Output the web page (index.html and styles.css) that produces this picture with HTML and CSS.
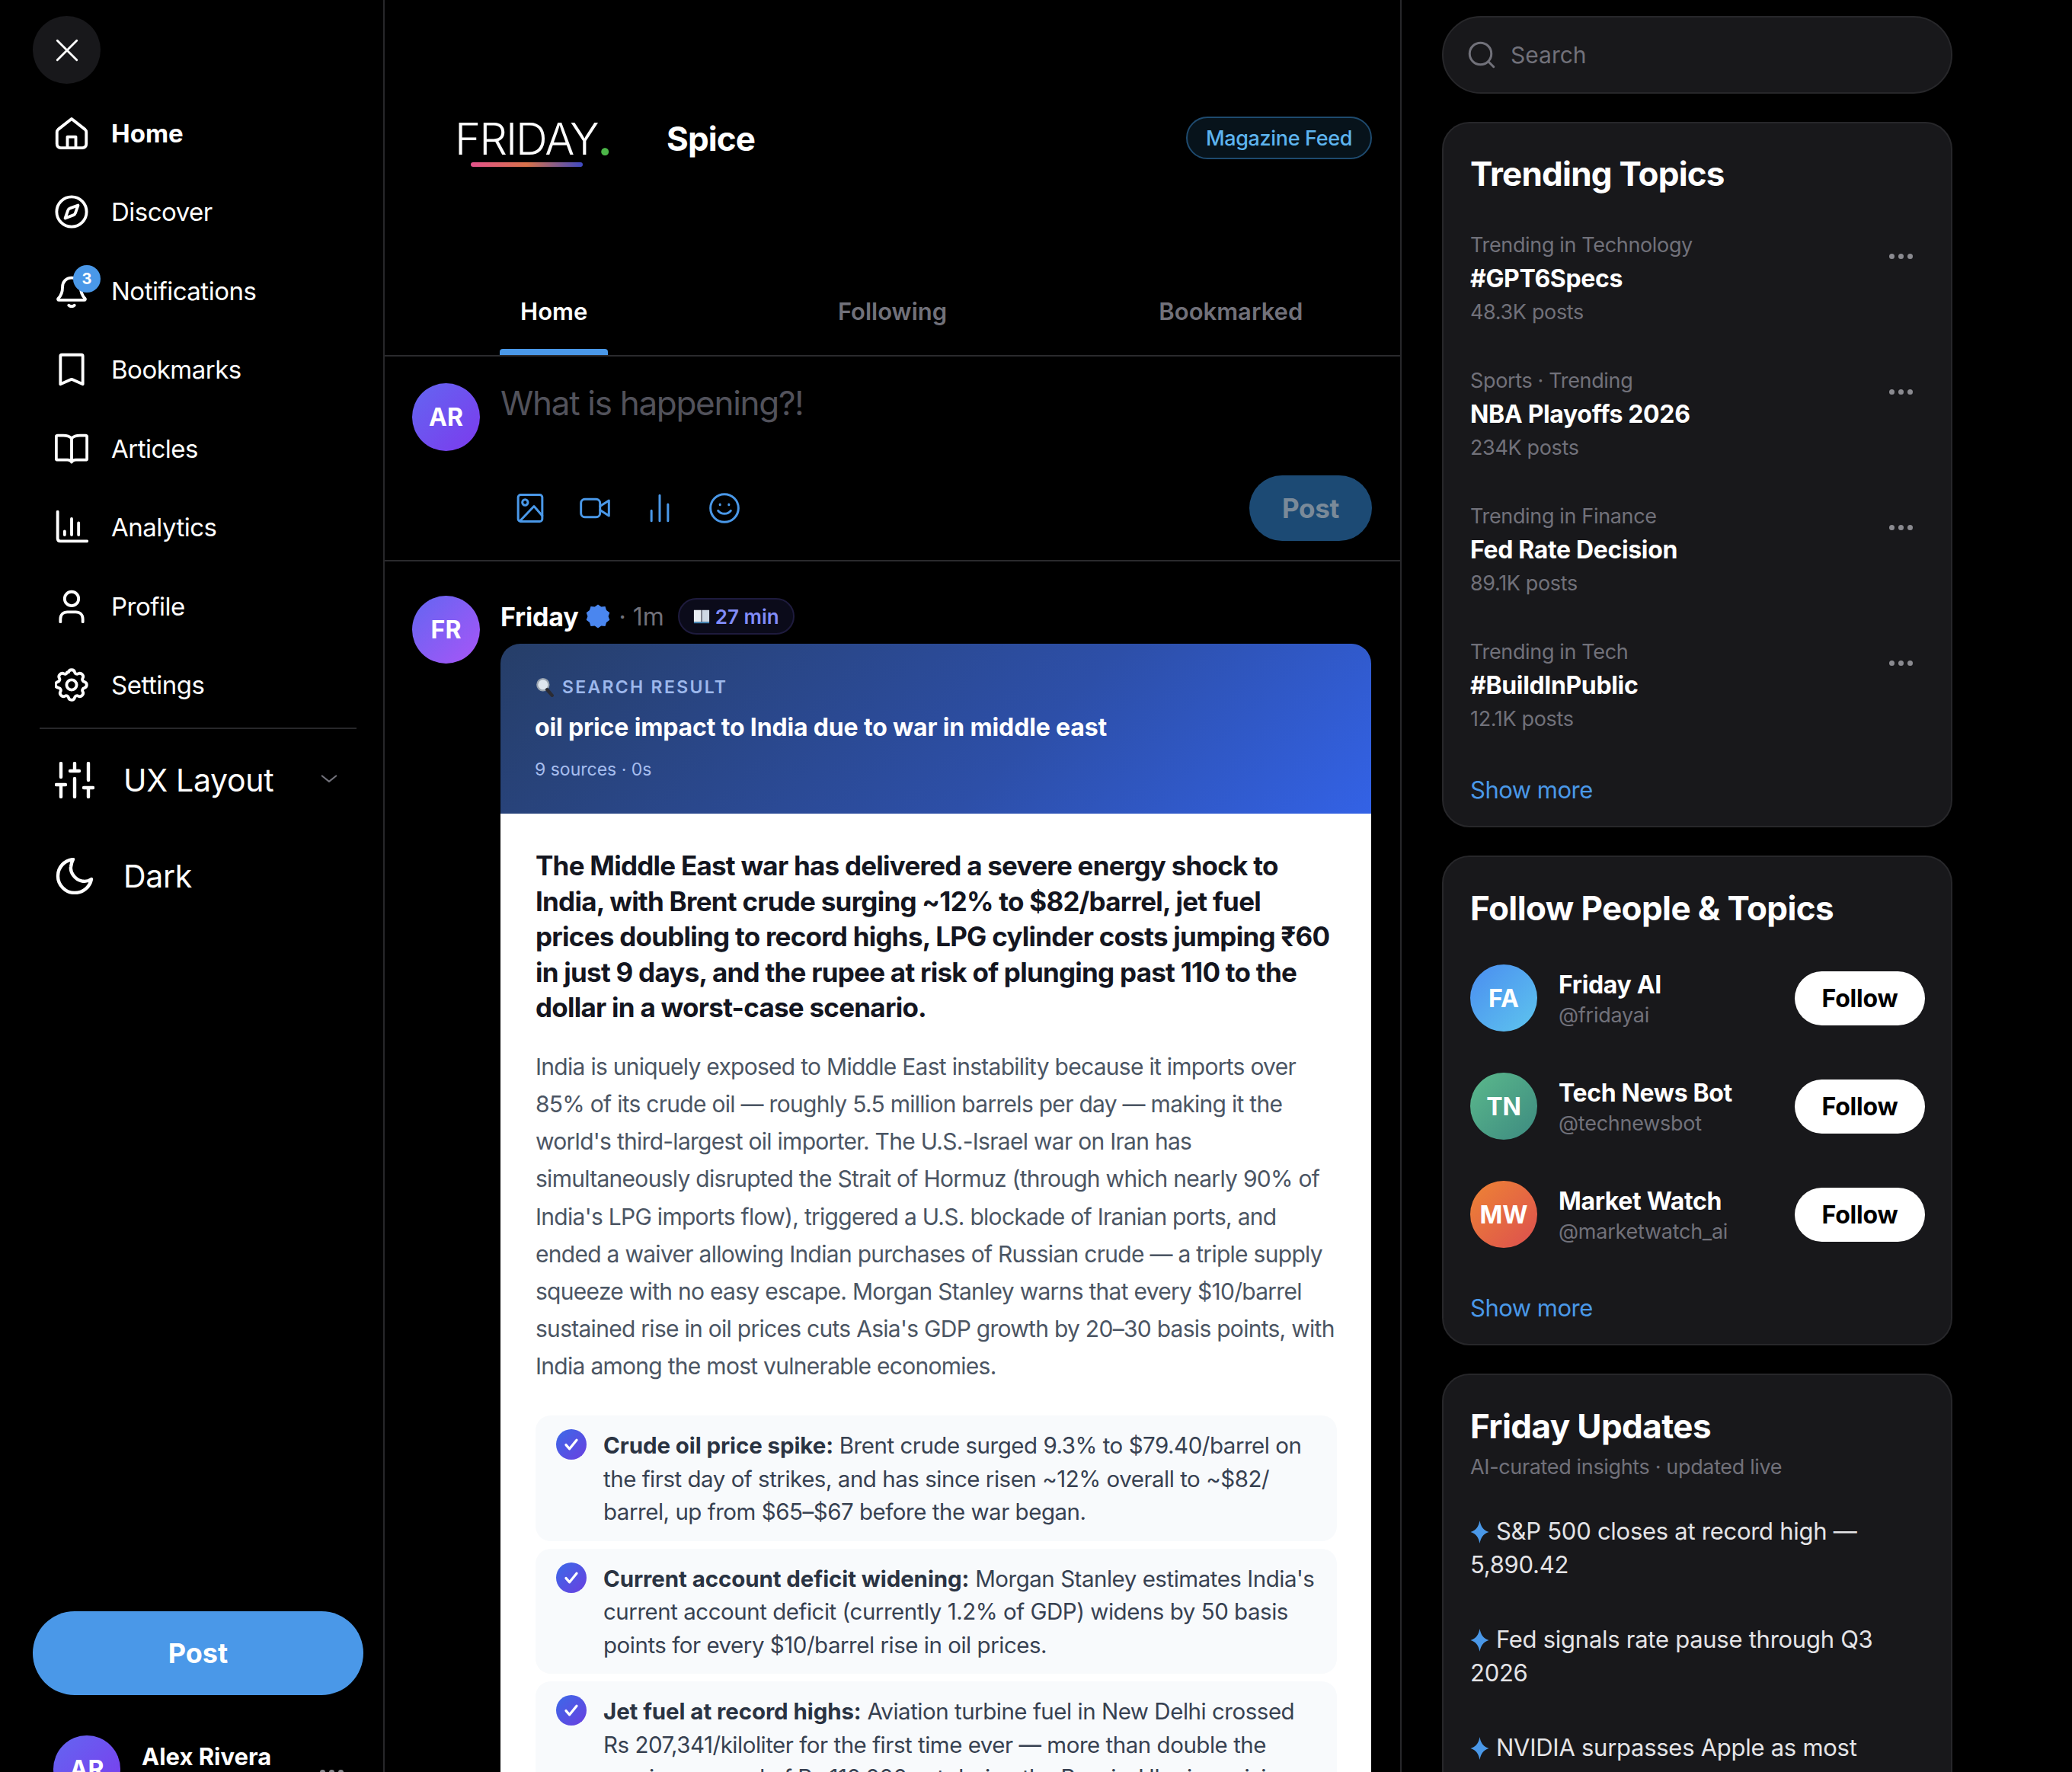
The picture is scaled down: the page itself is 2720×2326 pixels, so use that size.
FILE: index.html
```html
<!DOCTYPE html>
<html lang="en">
<head>
    <meta charset="UTF-8">
    <title>Friday Spice</title>
    <link rel="stylesheet" href="styles.css">
</head>
<body>
    <div class="app">

        <!-- Left nav -->
        <aside class="sidebar">
            <button class="close-btn">
                <svg viewBox="0 0 24 24" class="icon-close"><path d="M3 3l18 18M21 3L3 21"/></svg>
            </button>
            <nav class="nav">
                <a class="nav-item active">
                    <svg class="nav-icon" viewBox="0 0 24 24"><path d="M12 1.600l9.600 7.600c.6.5.9 1.100.9 1.900v8.600c0 1.600-1.100 2.700-2.700 2.700H4.200c-1.600 0-2.700-1.100-2.700-2.700v-8.600c0-.8.3-1.400.9-1.900z"/><path d="M9 22v-7.500h6V22"/></svg>
                    <span>Home</span>
                </a>
                <a class="nav-item">
                    <svg class="nav-icon" viewBox="0 0 24 24"><circle cx="12" cy="12" r="10.700"/><path d="M16.600 7.400l-1.900 5.500c-.2.6-.9 1.300-1.500 1.500l-5.800 2.200 2-5.600c.2-.6.9-1.300 1.500-1.500z"/></svg>
                    <span>Discover</span>
                </a>
                <a class="nav-item">
                    <span class="bell-wrap">
                        <svg class="nav-icon" viewBox="0 0 24 24"><path d="M12 2.500c-3.900 0-6.500 3-6.500 6.500 0 4.500-1.200 6.500-3 8.200-.6.600-.2 1.300.5 1.300h18c.7 0 1.100-.7.500-1.300-1.800-1.700-3-3.700-3-8.200 0-3.500-2.600-6.500-6.500-6.500z"/><path d="M10 22.200c1.200 1 2.800 1 4 0"/></svg>
                        <span class="nav-badge">3</span>
                    </span>
                    <span>Notifications</span>
                </a>
                <a class="nav-item">
                    <svg class="nav-icon" viewBox="0 0 24 24"><path d="M4 2.500c0-.6.400-1 1-1h14c.6 0 1 .4 1 1v20l-8-3.500-8 3.500z"/></svg>
                    <span>Bookmarks</span>
                </a>
                <a class="nav-item">
                    <svg class="nav-icon" viewBox="0 0 24 24"><path d="M12 21V4.500C10.500 3 8.500 2.500 6 2.500H2c-.6 0-1 .4-1 1V19c0 .6.400 1 1 1h7c1.500 0 2.500.4 3 1.500.5-1.100 1.500-1.500 3-1.500h7c.6 0 1-.4 1-1V3.500c0-.6-.4-1-1-1h-4c-2.500 0-4.500.5-6 2"/></svg>
                    <span>Articles</span>
                </a>
                <a class="nav-item">
                    <svg class="nav-icon" viewBox="0 0 24 24"><path d="M2 1v19c0 1.200.8 2 2 2h19M7 17.500V15M12 17.500V6M17 17.500V9"/></svg>
                    <span>Analytics</span>
                </a>
                <a class="nav-item">
                    <svg class="nav-icon" viewBox="0 0 24 24"><circle cx="12" cy="6.500" r="5"/><path d="M4 23v-2c0-3 2-5 5-5h6c3 0 5 2 5 5v2"/></svg>
                    <span>Profile</span>
                </a>
                <a class="nav-item">
                    <svg class="nav-icon" viewBox="0 0 24 24"><circle cx="12" cy="12" r="3.600"/><path d="M9.800 2.900c.2-1 1.100-1.700 2.200-1.700s2 .7 2.200 1.700c.2 1.100 1.500 1.700 2.500 1.100.9-.5 2-.4 2.800.4.800.8 1 2 .4 2.900-.5.900 0 2.200 1.100 2.500 1 .3 1.800 1.100 1.800 2.200s-.8 1.900-1.800 2.200c-1.100.3-1.600 1.600-1.100 2.500.6.900.4 2.100-.4 2.900-.8.800-1.900.9-2.800.4-1-.6-2.300 0-2.500 1.100-.2 1-1.100 1.700-2.200 1.700s-2-.7-2.200-1.700c-.2-1.100-1.500-1.700-2.500-1.100-.9.500-2 .4-2.800-.4-.8-.8-1-2-.4-2.900.5-.9 0-2.200-1.100-2.500C1.200 13.900.4 13.100.4 12s.8-1.900 1.800-2.200c1.100-.3 1.600-1.600 1.100-2.500-.6-.9-.4-2.100.4-2.900.8-.8 1.900-.9 2.800-.4 1 .6 2.100 0 2.300-1.100z"/></svg>
                    <span>Settings</span>
                </a>
            </nav>
            <div class="nav-divider"></div>
            <a class="nav-big">
                <svg class="big-icon" viewBox="0 0 26 24"><path d="M4 1v9M4 15v8M1 15h6M13 1v5M13 11v12M10 6h6M22 1v11M22 17v6M19 17h6"/></svg>
                <span>UX Layout</span>
                <svg class="chevron" viewBox="0 0 24 24"><path d="M2 6l10 8 10-8"/></svg>
            </a>
            <a class="nav-big dark-row">
                <svg class="big-icon" viewBox="0 0 24 24"><path d="M11 1C5.500 1.500 1 6 1 12c0 6 5 11 11 11 5.500 0 10-3.800 11-9-2 1.400-4 1.800-6.500 1.200C12 14 9 9.500 9.500 6c.2-2 .7-3.500 1.500-5z"/></svg>
                <span>Dark</span>
            </a>
            <div class="sidebar-foot">
                <button class="post-big">Post</button>
                <div class="me">
                    <div class="avatar av-purple">AR</div>
                    <div class="me-text">
                        <div class="me-name">Alex Rivera</div>
                        <div class="me-handle">@alexrivera</div>
                    </div>
                    <div class="me-dots"><i></i><i></i><i></i></div>
                </div>
            </div>
        </aside>

        <!-- Feed -->
        <main class="feed">
            <header class="feed-head">
                <div class="logo">
                    <div class="logo-word">FRIDAY<span class="logo-dot">.</span></div>
                    <div class="logo-line"></div>
                </div>
                <div class="brand-name">Spice</div>
                <div class="mag-pill">Magazine Feed</div>
            </header>
            <div class="tabs">
                <div class="tab active">Home</div>
                <div class="tab">Following</div>
                <div class="tab">Bookmarked</div>
            </div>

            <section class="composer">
                <div class="avatar av-purple">AR</div>
                <div class="composer-main">
                    <div class="composer-input">What is happening?!</div>
                    <div class="composer-tools">
                        <div class="tool-icons">
                            <svg viewBox="0 0 24 24" class="tool"><rect x="2.500" y="1.500" width="19" height="21" rx="2"/><circle cx="8" cy="7.500" r="2.200"/><path d="M4 22l11-11.500 6.500 7.500"/></svg>
                            <svg viewBox="0 0 24 24" class="tool"><rect x="1" y="5" width="15" height="14" rx="3"/><path d="M16 10.500L23 6v12l-7-4.500"/></svg>
                            <svg viewBox="0 0 24 24" class="tool"><path d="M5.500 22v-8M12 22V2M18.500 22V9"/></svg>
                            <svg viewBox="0 0 24 24" class="tool"><circle cx="12" cy="12" r="11"/><path d="M7 14c2.500 3.200 7.500 3.200 10 0M8.500 9v.5M15.500 9v.5"/></svg>
                        </div>
                        <button class="post-small">Post</button>
                    </div>
                </div>
            </section>

            <article class="post">
                <div class="avatar av-violet">FR</div>
                <div class="post-main">
                    <div class="post-meta">
                        <span class="post-author">Friday</span>
                        <svg class="verified" viewBox="0 0 24 24"><path d="M12 1l3 2.200 3.700-.3 1.100 3.500 3 2.200L21.600 12l1.200 3.400-3 2.200-1.100 3.500-3.700-.3L12 23l-3-2.200-3.700.3-1.100-3.500-3-2.200L2.400 12 1.200 8.600l3-2.200 1.100-3.500 3.700.3z"/></svg>
                        <span class="post-time">· 1m</span>
                        <span class="read-pill">
                            <svg class="book" viewBox="0 0 24 24"><path d="M1 3h10.500v17H1z" fill="#e8edf2"/><path d="M12.500 3H23v17H12.500z" fill="#cfd8e3"/><path d="M1 20h22v2H1z" fill="#4a90c2"/></svg>
                            27 min
                        </span>
                    </div>

                    <div class="result-card">
                        <div class="result-head">
                            <div class="result-label">
                                <svg class="lens" viewBox="0 0 24 24"><circle cx="10" cy="9" r="7" fill="#dfe6ee" stroke="#9aa4b0" stroke-width="2"/><path d="M15 15l6 7" stroke="#2b2b33" stroke-width="4" stroke-linecap="round"/></svg>
                                SEARCH RESULT
                            </div>
                            <div class="result-title">oil price impact to India due to war in middle east</div>
                            <div class="result-sub">9 sources · 0s</div>
                        </div>
                        <div class="result-body">
                            <p class="lead">The Middle East war has delivered a severe energy shock to India, with Brent crude surging ~12% to $82/barrel, jet fuel prices doubling to record highs, LPG cylinder costs jumping ₹60 in just 9 days, and the rupee at risk of plunging past 110 to the dollar in a worst-case scenario.</p>
                            <p class="para">India is uniquely exposed to Middle East instability because it imports over 85% of its crude oil — roughly 5.5 million barrels per day — making it the world's third-largest oil importer. The U.S.-Israel war on Iran has simultaneously disrupted the Strait of Hormuz (through which nearly 90% of India's LPG imports flow), triggered a U.S. blockade of Iranian ports, and ended a waiver allowing Indian purchases of Russian crude — a triple supply squeeze with no easy escape. Morgan Stanley warns that every $10/barrel sustained rise in oil prices cuts Asia's GDP growth by 20–30 basis points, with India among the most vulnerable economies.</p>
                            <ul class="points">
                                <li class="point">
                                    <span class="check"><svg viewBox="0 0 24 24"><path d="M6 12.500l4 4.500 8-10"/></svg></span>
                                    <div><strong>Crude oil price spike:</strong> Brent crude surged 9.3% to $79.40/barrel on the first day of strikes, and has since risen ~12% overall to ~$82/<wbr>barrel, up from $65–$67 before the war began.</div>
                                </li>
                                <li class="point">
                                    <span class="check"><svg viewBox="0 0 24 24"><path d="M6 12.500l4 4.500 8-10"/></svg></span>
                                    <div><strong>Current account deficit widening:</strong> Morgan Stanley estimates India's current account deficit (currently 1.2% of GDP) widens by 50 basis points for every $10/barrel rise in oil prices.</div>
                                </li>
                                <li class="point">
                                    <span class="check"><svg viewBox="0 0 24 24"><path d="M6 12.500l4 4.500 8-10"/></svg></span>
                                    <div><strong>Jet fuel at record highs:</strong> Aviation turbine fuel in New Delhi crossed Rs 207,341/kiloliter for the first time ever — more than double the previous record of Rs 110,000 set during the Russia-Ukraine crisis.</div>
                                </li>
                            </ul>
                        </div>
                    </div>
                </div>
            </article>
        </main>

        <!-- Right column -->
        <aside class="rail">
            <div class="search">
                <svg viewBox="0 0 24 24" class="search-icon"><circle cx="11" cy="11" r="9.500"/><path d="M18 18l4.500 4.500"/></svg>
                <span>Search</span>
            </div>

            <section class="card trending">
                <h3 class="card-title">Trending Topics</h3>
                <div class="trend">
                    <div>
                        <div class="trend-cat">Trending in Technology</div>
                        <div class="trend-name">#GPT6Specs</div>
                        <div class="trend-count">48.3K posts</div>
                    </div>
                    <div class="dots"><i></i><i></i><i></i></div>
                </div>
                <div class="trend">
                    <div>
                        <div class="trend-cat">Sports · Trending</div>
                        <div class="trend-name">NBA Playoffs 2026</div>
                        <div class="trend-count">234K posts</div>
                    </div>
                    <div class="dots"><i></i><i></i><i></i></div>
                </div>
                <div class="trend">
                    <div>
                        <div class="trend-cat">Trending in Finance</div>
                        <div class="trend-name">Fed Rate Decision</div>
                        <div class="trend-count">89.1K posts</div>
                    </div>
                    <div class="dots"><i></i><i></i><i></i></div>
                </div>
                <div class="trend">
                    <div>
                        <div class="trend-cat">Trending in Tech</div>
                        <div class="trend-name">#BuildInPublic</div>
                        <div class="trend-count">12.1K posts</div>
                    </div>
                    <div class="dots"><i></i><i></i><i></i></div>
                </div>
                <a class="show-more">Show more</a>
            </section>

            <section class="card follow">
                <h3 class="card-title">Follow People &amp; Topics</h3>
                <div class="person">
                    <div class="avatar av-blue">FA</div>
                    <div class="person-text">
                        <div class="person-name">Friday AI</div>
                        <div class="person-handle">@fridayai</div>
                    </div>
                    <button class="follow-btn">Follow</button>
                </div>
                <div class="person">
                    <div class="avatar av-green">TN</div>
                    <div class="person-text">
                        <div class="person-name">Tech News Bot</div>
                        <div class="person-handle">@technewsbot</div>
                    </div>
                    <button class="follow-btn">Follow</button>
                </div>
                <div class="person">
                    <div class="avatar av-orange">MW</div>
                    <div class="person-text">
                        <div class="person-name">Market Watch</div>
                        <div class="person-handle">@marketwatch_ai</div>
                    </div>
                    <button class="follow-btn">Follow</button>
                </div>
                <a class="show-more">Show more</a>
            </section>

            <section class="card updates">
                <h3 class="card-title">Friday Updates</h3>
                <div class="updates-sub">AI-curated insights · updated live</div>
                <p class="update"><svg class="spark" viewBox="0 0 24 30"><path d="M12 0c1.500 8 4.500 12.500 12 15-7.500 2.500-10.500 7-12 15C10.500 22 7.500 17.500 0 15 7.500 12.500 10.500 8 12 0z"/></svg>S&amp;P 500 closes at record high — 5,890.42</p>
                <p class="update"><svg class="spark" viewBox="0 0 24 30"><path d="M12 0c1.500 8 4.500 12.500 12 15-7.500 2.500-10.500 7-12 15C10.500 22 7.500 17.500 0 15 7.500 12.500 10.500 8 12 0z"/></svg>Fed signals rate pause through Q3 2026</p>
                <p class="update"><svg class="spark" viewBox="0 0 24 30"><path d="M12 0c1.500 8 4.500 12.500 12 15-7.500 2.500-10.500 7-12 15C10.500 22 7.500 17.500 0 15 7.500 12.500 10.500 8 12 0z"/></svg>NVIDIA surpasses Apple as most valuable company</p>
            </section>
        </aside>
    </div>
</body>
</html>
```

FILE: styles.css
```css
* { box-sizing: border-box; }
html, body { margin: 0; padding: 0; height: 100%; overflow: hidden; }
body { background: #000; color: #fff; font-family: Inter, "Noto Sans", sans-serif; }
svg { display: block; fill: none; stroke: currentColor; stroke-linecap: round; stroke-linejoin: round; }
button { font-family: inherit; border: none; }
ul { list-style: none; margin: 0; padding: 0; }

.app { display: flex; align-items: flex-start; height: 2326px; overflow: hidden; }

/* avatars */
.avatar { width: 88px; height: 88px; flex: none; border-radius: 50%; display: flex; align-items: center; justify-content: center; font-size: 32px; font-weight: 700; color: #fff; }
.av-purple { background: linear-gradient(135deg, #6366f1, #7c3aed); }
.av-violet { background: linear-gradient(135deg, #6366f1, #a855f7); }
.av-blue { background: linear-gradient(135deg, #4a8df0, #5ec5ee); }
.av-green { background: linear-gradient(135deg, #5bb98c, #3d8a80); }
.av-orange { background: linear-gradient(135deg, #ee8434, #dc4f4f); }

/* sidebar */
.sidebar { width: 505px; height: 2410px; flex: none; border-right: 2px solid #27272a; padding: 21px 27px 44px 43px; display: flex; flex-direction: column; }
.close-btn { width: 89px; height: 89px; border-radius: 50%; background: #18181b; color: #fff; display: flex; align-items: center; justify-content: center; padding: 0; }
.icon-close { width: 34px; height: 34px; stroke-width: 2; }
.nav { display: flex; flex-direction: column; margin-top: 13px; }
.nav-item { display: flex; align-items: center; gap: 30px; height: 103.500px; padding-left: 29px; font-size: 33px; letter-spacing: -0.500px; color: #fff; }
.nav-item.active { font-weight: 700; letter-spacing: 0; }
.nav-icon { width: 44px; height: 44px; flex: none; stroke-width: 2.100; }
.bell-wrap { position: relative; display: block; }
.nav-badge { position: absolute; top: -12px; left: 24px; width: 36px; height: 36px; border-radius: 50%; background: #4a98e8; font-size: 20px; font-weight: 700; letter-spacing: 0; display: flex; align-items: center; justify-content: center; }
.nav-divider { height: 2px; background: #27272a; margin: 4px 0 0 9px; width: 416px; }
.nav-big { display: flex; align-items: center; gap: 38px; height: 124px; padding-left: 29px; font-size: 41px; letter-spacing: -0.300px; margin-top: 5px; }
.big-icon { width: 52px; height: 48px; flex: none; stroke-width: 2.200; }
.dark-row { margin-top: 2px; }
.chevron { width: 22px; height: 22px; color: #71717a; stroke-width: 2.400; margin-left: auto; margin-right: 33px; }
.sidebar-foot { margin-top: auto; }
.post-big { width: 434px; height: 110px; border-radius: 55px; background: #4a98e8; color: #fff; font-size: 36px; font-weight: 700; }
.me { display: flex; align-items: flex-start; gap: 28px; margin-top: 53px; padding-left: 27px; }
.me-text { padding-top: 8px; flex: 1; }
.me-name { font-size: 31px; font-weight: 700; line-height: 40px; }
.me-handle { font-size: 27px; color: #71717a; margin-top: 4px; }
.me-dots { display: flex; gap: 5px; margin-top: 45px; margin-right: 25px; }
.me-dots i { width: 7px; height: 7px; border-radius: 50%; background: #8a8a90; }

/* feed */
.feed { width: 1335px; flex: none; border-right: 2px solid #27272a; }
.feed-head { height: 364px; display: flex; align-items: flex-start; padding: 153px 37px 0 92px; }
.logo { width: 212px; flex: none; }
.logo-word { font-size: 58px; font-weight: 300; line-height: 58px; letter-spacing: -2px; color: #fff; white-space: nowrap; }
.logo-dot { color: #4cb648; font-weight: 700; }
.logo-line { width: 147px; height: 6px; margin: 2px 0 0 21px; border-radius: 3px; background: linear-gradient(90deg, #e2528b, #d8724a 50%, #3e49c2); }
.brand-name { font-size: 44px; font-weight: 700; margin-left: 66px; line-height: 58px; letter-spacing: -0.900px; }
.mag-pill { margin-left: auto; height: 56px; padding: 0 24px; border: 2px solid #1e4a6e; border-radius: 28px; background: #07131b; color: #5db4ef; font-size: 27px; letter-spacing: -0.350px; font-weight: 500; display: flex; align-items: center; }
.tabs { display: flex; height: 104px; border-bottom: 2px solid #2a2a2d; }
.tab { flex: 1; display: flex; align-items: center; justify-content: center; padding-bottom: 14px; font-size: 31px; font-weight: 600; color: #71717a; position: relative; }
.tab.active { color: #fff; }
.tab.active::after { content: ""; position: absolute; bottom: 0; left: 50%; width: 142px; height: 8px; margin-left: -71px; background: #4a98e8; border-radius: 4px 4px 0 0; }
.composer { display: flex; gap: 27px; padding: 35px 37px 26px 36px; border-bottom: 2px solid #2a2a2d; height: 269px; }
.composer .avatar, .post .avatar { width: 89px; height: 89px; }
.composer-main { flex: 1; }
.composer-input { font-size: 44px; line-height: 52px; color: #52525b; letter-spacing: -1.300px; }
.composer-tools { display: flex; align-items: center; justify-content: space-between; margin-top: 69px; padding-left: 19px; }
.tool-icons { display: flex; gap: 45px; color: #4a98e8; }
.tool { width: 40px; height: 40px; stroke-width: 1.800; }
.post-small { width: 161px; height: 86px; border-radius: 43px; background: #1c4a74; color: #7a8a99; font-size: 35px; font-weight: 700; letter-spacing: -0.300px; }
.post { display: flex; gap: 27px; padding: 45px 38px 0 36px; }
.post-main { flex: 1; min-width: 0; }
.post-meta { display: flex; align-items: center; height: 50px; margin-top: 2px; }
.post-author { font-size: 34px; font-weight: 700; letter-spacing: -0.200px; }
.verified { width: 34px; height: 34px; margin-left: 9px; fill: #4a86ef; stroke: none; }
.post-time { font-size: 32px; color: #71717a; margin-left: 10px; }
.read-pill { display: flex; align-items: center; gap: 7px; height: 48px; margin-left: 18px; padding: 0 18px; border: 2px solid #1e1b3d; border-radius: 24px; background: #0b0b1a; color: #818cf8; font-size: 26px; font-weight: 600; }
.book { width: 22px; height: 22px; stroke: none; }
.result-card { margin-top: 11px; border-radius: 26px 26px 0 0; overflow: hidden; }
.result-head { height: 223px; padding: 42px 45px 0; background: linear-gradient(135deg, #263e68, #2d4fa8 60%, #3362e6); }
.result-label { display: flex; align-items: center; gap: 10px; font-size: 23px; font-weight: 600; letter-spacing: 2.300px; color: #9db8ec; height: 30px; }
.lens { width: 26px; height: 26px; stroke: none; }
.result-title { font-size: 32px; letter-spacing: -0.150px; font-weight: 700; margin-top: 16px; line-height: 44px; }
.result-sub { font-size: 23px; color: #a6bdee; margin-top: 19px; }
.result-body { background: #fff; padding: 45px 46px 0; color: #111827; }
.lead { margin: 0; font-size: 35px; letter-spacing: -0.750px; font-weight: 700; line-height: 46.600px; color: #14161f; }
.para { margin: 30px 0 0; font-size: 30px; letter-spacing: -0.720px; line-height: 49.150px; color: #4b5563; }
.points { margin-top: 40px; display: flex; flex-direction: column; gap: 10px; }
.point { display: flex; gap: 22px; padding: 18px 26px 16px 27px; background: #f8fafc; border-radius: 20px; font-size: 29.500px; letter-spacing: -0.480px; line-height: 43.500px; color: #374151; margin-right: -1px; }
.point strong { color: #2a3342; font-weight: 700; letter-spacing: -0.100px; }
.check { width: 40px; height: 40px; flex: none; border-radius: 50%; background: linear-gradient(135deg, #3b6ae8, #6a3fe0); color: #fff; display: flex; align-items: center; justify-content: center; }
.check svg { width: 28px; height: 28px; stroke-width: 2.800; }

/* right rail */
.rail { width: 670px; flex: none; margin-left: 53px; padding-top: 21px; }
.search { height: 102px; display: flex; align-items: center; gap: 20px; padding-left: 32px; border: 2px solid #27272a; border-radius: 51px; background: #18181b; font-size: 30px; color: #71717a; }
.search-icon { width: 36px; height: 38px; stroke-width: 2; }
.card { margin-top: 37px; border: 2px solid #27272a; border-radius: 36px; background: #18181b; padding: 0 36px 0 35px; }
.card-title { margin: 0; font-size: 44px; font-weight: 700; letter-spacing: -0.600px; line-height: 56px; }
.trending { height: 926px; padding-top: 38px; }
.trend { display: flex; justify-content: space-between; height: 178px; }
.trending .card-title { margin-bottom: 48px; letter-spacing: -0.800px; }
.trend-cat { font-size: 27px; letter-spacing: -0.350px; line-height: 36px; color: #71717a; }
.trend-name { font-size: 32px; letter-spacing: -0.350px; font-weight: 700; line-height: 44px; margin-top: 4px; }
.trend-count { font-size: 27px; letter-spacing: -0.350px; line-height: 36px; color: #71717a; margin-top: 4px; }
.dots { display: flex; gap: 5px; margin: 29px 14px 0 0; }
.dots i { width: 7px; height: 7px; border-radius: 50%; background: #8a8a90; }
.show-more { display: block; font-size: 31px; letter-spacing: -0.500px; line-height: 42px; color: #4a98e8; }
.follow { height: 643px; padding-top: 39px; }
.follow .card-title { margin-bottom: 46px; }
.person { display: flex; align-items: center; height: 142px; padding-bottom: 54px; }
.person-text { flex: 1; margin-left: 28px; padding-top: 4px; }
.person-name { font-size: 32px; letter-spacing: -0.350px; font-weight: 700; line-height: 40px; }
.person-handle { font-size: 27px; letter-spacing: -0.250px; line-height: 36px; color: #71717a; margin-top: 2px; }
.follow-btn { width: 171px; height: 71px; border-radius: 36px; background: #fff; color: #000; font-size: 32px; letter-spacing: -0.200px; font-weight: 700; margin-right: -2px; }
.follow .show-more { margin-top: 4px; }
.updates { height: 600px; padding-top: 39px; }
.updates-sub { font-size: 27px; letter-spacing: -0.350px; line-height: 36px; color: #71717a; margin-top: 8px; }
.update { margin: 0 0 54px; font-size: 31px; letter-spacing: -0.270px; line-height: 44px; color: #e4e4e7; }
.updates-sub + .update { margin-top: 44px; }
.spark { display: inline-block; width: 25px; height: 30px; margin-right: 9px; vertical-align: -5px; fill: #4a98e8; stroke: none; }
```
